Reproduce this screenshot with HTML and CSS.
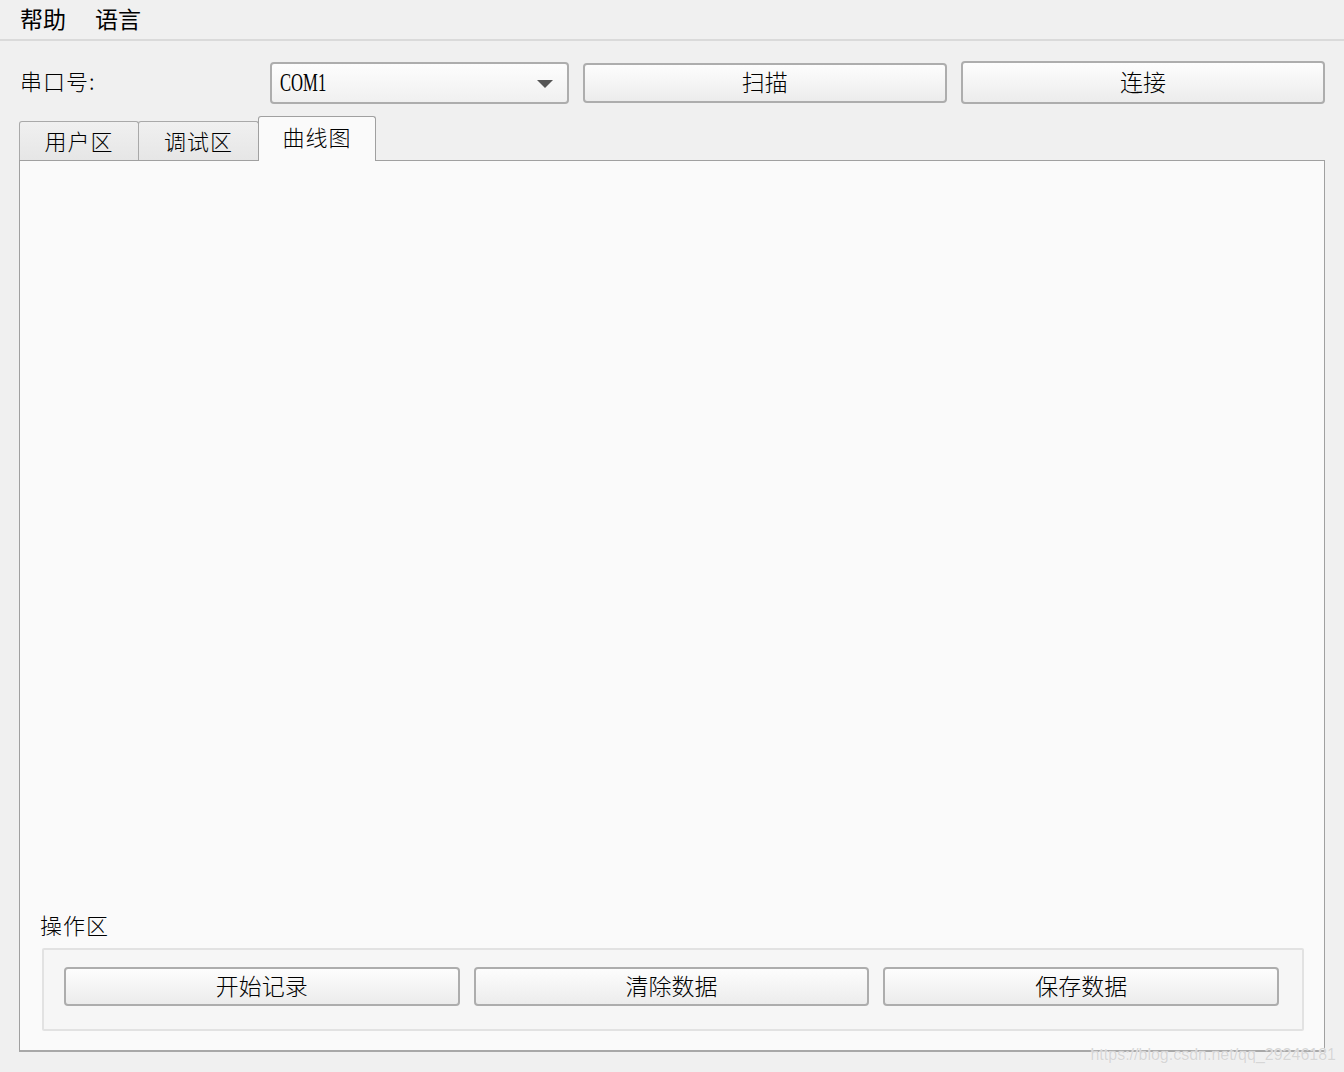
FILE: index.html
```
<!DOCTYPE html>
<html lang="zh-CN">
<head>
<meta charset="utf-8">
<title>串口工具</title>
<link rel="stylesheet" href="styles.css">
</head>
<body>
<div class="menubar">
  <span class="menu-item">帮助</span>
  <span class="menu-item">语言</span>
</div>
<div class="port-row">
  <span class="port-label">串口号:</span>
  <div class="combo">
    <span class="combo-text">COM1</span>
    <span class="combo-arrow"></span>
  </div>
  <button class="btn btn-scan">扫描</button>
  <button class="btn btn-connect">连接</button>
</div>
<div class="tabs">
  <div class="tab">用户区</div>
  <div class="tab">调试区</div>
  <div class="tab tab-active">曲线图</div>
</div>
<div class="pane">
  <div class="chart"></div>
  <div class="group-title">操作区</div>
  <div class="group">
    <button class="btn btn-op">开始记录</button>
    <button class="btn btn-op">清除数据</button>
    <button class="btn btn-op">保存数据</button>
  </div>
</div>
<div class="watermark">https://blog.csdn.net/qq_29246181</div>
</body>
</html>
```
FILE: styles.css
```
html, body {
  margin: 0;
  padding: 0;
}
body {
  width: 1344px;
  height: 1072px;
  background: #f0f0f0;
  font-family: "Noto Sans CJK SC", "Noto Sans", sans-serif;
  color: #000;
  position: relative;
  overflow: hidden;
}
.menubar {
  border-bottom: 2px solid #dadada;
  display: flex;
  align-items: center;
  padding-left: 20px;
  gap: 29px;
  box-sizing: border-box;
  height: 41px;
}
.menu-item {
  font-size: 23px;
  line-height: 1;
  font-weight: 400;
  margin-top: -3px;
}
.port-row {
  display: flex;
  align-items: center;
  margin-top: 20px;
  padding-left: 20px;
  padding-right: 19px;
  height: 43px;
}
.port-label {
  width: 251px;
  font-size: 22px;
  letter-spacing: 1px;
  line-height: 1;
  font-weight: 300;
  margin-top: -5px;
}
.combo {
  width: 299px;
  height: 42px;
  box-sizing: border-box;
  border: 2px solid #adadad;
  border-radius: 4px;
  background: linear-gradient(#fdfdfd, #f0f0f0);
  display: flex;
  align-items: center;
  position: relative;
}
.combo-text {
  font-family: "Liberation Serif", serif;
  font-size: 26px;
  line-height: 1;
  display: inline-block;
  transform: scaleX(0.64);
  transform-origin: left center;
  margin-left: 8px;
}
.combo-arrow {
  position: absolute;
  right: 14px;
  top: 16px;
  width: 0;
  height: 0;
  border-left: 8px solid transparent;
  border-right: 8px solid transparent;
  border-top: 8px solid #555;
}
.btn {
  font-family: "Noto Sans CJK SC", "Noto Sans", sans-serif;
  font-size: 23px;
  font-weight: 300;
  color: #000;
  border: 2px solid #adadad;
  border-radius: 4px;
  background: linear-gradient(#fdfdfd, #ececec);
  padding: 0 0 3px 0;
  line-height: 1;
  box-sizing: border-box;
}
.btn-scan {
  width: 365px;
  height: 40px;
  margin-left: 14px;
}
.btn-connect {
  width: 365px;
  height: 43px;
  margin-left: 14px;
}
.tabs {
  display: flex;
  align-items: flex-end;
  margin-top: 12px;
  padding-left: 19px;
  height: 44px;
  position: relative;
  z-index: 1;
}
.tab {
  width: 120px;
  height: 39px;
  box-sizing: border-box;
  border: 1px solid #a9a9a9;
  border-bottom: none;
  border-radius: 3px 3px 0 0;
  background: linear-gradient(#f0f0f0, #e6e6e6);
  display: flex;
  align-items: center;
  justify-content: center;
  font-size: 22px;
  font-weight: 300;
  letter-spacing: 1px;
  padding-bottom: 3px;
}
.tab + .tab {
  margin-left: -1px;
  width: 121px;
}
.tab-active {
  width: 118px !important;
  height: 45px;
  margin-bottom: -1px;
  background: #fafafa;
  border-color: #a0a0a0;
  padding-bottom: 6px;
}
.pane {
  margin-left: 19px;
  width: 1306px;
  height: 892px;
  box-sizing: border-box;
  border: 1px solid #a0a0a0;
  border-bottom: 2px solid #a8a8a8;
  background: #fafafa;
  display: flex;
  flex-direction: column;
  padding: 0 20px 19px 22px;
}
.chart {
  flex: 1;
}
.group-title {
  font-size: 22px;
  font-weight: 300;
  letter-spacing: 1px;
  line-height: 1;
  margin-left: -2px;
  margin-bottom: 13px;
}
.group {
  height: 83px;
  box-sizing: border-box;
  border: 2px solid #e2e2e2;
  border-radius: 2px;
  background: #f6f6f6;
  display: flex;
  align-items: flex-start;
  gap: 14px;
  padding: 17px 23px 0 20px;
}
.btn-op {
  flex: 1;
  height: 39px;
}
.watermark {
  position: absolute;
  right: 8px;
  bottom: 8px;
  font-family: "Liberation Sans", Arial, sans-serif;
  font-size: 16px;
  color: #d6d6d6;
  text-shadow: 0 0 1px #fff;
}
```
